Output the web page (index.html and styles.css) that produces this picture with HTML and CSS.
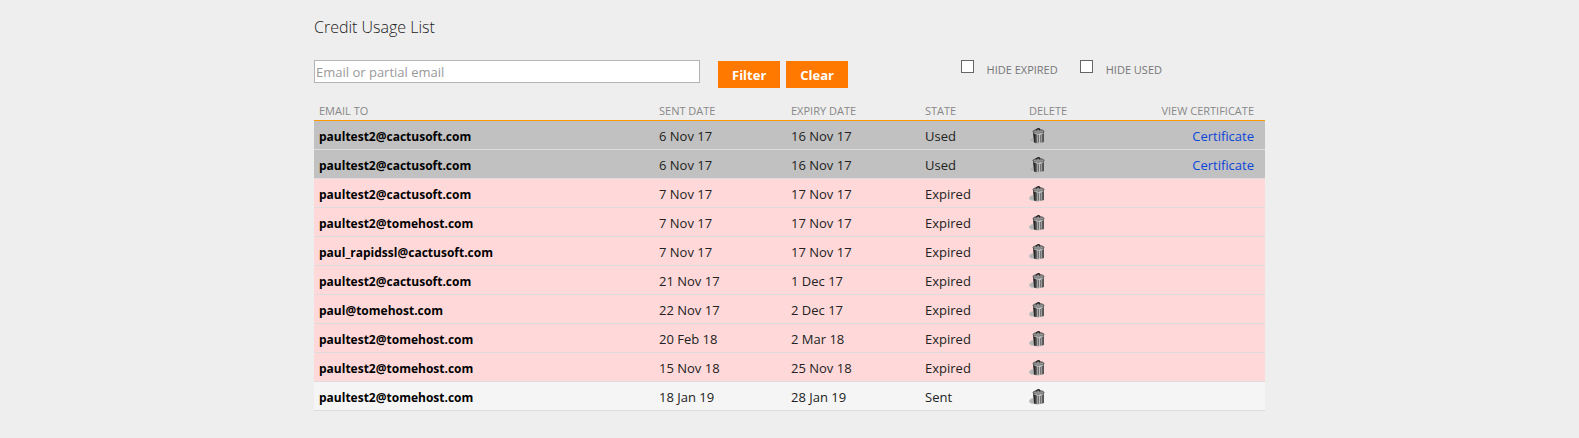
FILE: index.html
```html
<!DOCTYPE html>
<html lang="en">

<head>
    <meta charset="UTF-8">
    <meta name="viewport" content="width=device-width, initial-scale=1.0">
    <title>Credit Usage List</title>
    <link rel="stylesheet" href="styles.css">
</head>

<body>
    <svg class="sprite" aria-hidden="true">
        <defs>
            <linearGradient id="metal" x1="0" x2="1" y1="0" y2="0">
                <stop offset="0" stop-color="#111" />
                <stop offset="0.2" stop-color="#333" />
                <stop offset="0.35" stop-color="#999" />
                <stop offset="0.65" stop-color="#c8c8c8" />
                <stop offset="1" stop-color="#444" />
            </linearGradient>
        </defs>
        <symbol id="bin" viewBox="0 0 16 16">
            <path d="M4 9 Q0 10 0 12.500 Q1 15 6 15 Z" fill="#b4b4b4" stroke="#d4d4d4" stroke-width="0.500" />
            <path d="M4 4 H15 V14 Q10 16.500 5 14.500 Z" fill="url(#metal)" />
            <path d="M7.500 7 V14.500 M9.500 7 V14.500 M11.500 7 V14.500 M13.500 6 V14" stroke="#555" stroke-width="0.700" />
            <ellipse cx="9.500" cy="3.500" rx="5.500" ry="2" fill="#909090" stroke="#333" stroke-width="0.700" />
            <path d="M4.500 5 Q9.500 7 14.500 5" fill="none" stroke="#ccc" stroke-width="0.800" />
            <path d="M7 2.500 Q8 0.500 10 0.500 L11 2.500" fill="none" stroke="#222" stroke-width="1.200" />
        </symbol>
    </svg>

    <div class="container">
        <h1>Credit Usage List</h1>
        <form class="filters">
            <input type="text" class="search" placeholder="Email or partial email" aria-label="Email or partial email">
            <div class="buttons">
                <button type="button">Filter</button>
                <button type="button">Clear</button>
            </div>
            <div class="checks">
                <label><input type="checkbox"><span>HIDE EXPIRED</span></label>
                <label><input type="checkbox"><span>HIDE USED</span></label>
            </div>
        </form>

        <table>
            <thead>
                <tr>
                    <th class="col-email">EMAIL TO</th>
                    <th class="col-sent">SENT DATE</th>
                    <th class="col-expiry">EXPIRY DATE</th>
                    <th class="col-state">STATE</th>
                    <th class="col-delete">DELETE</th>
                    <th class="view">VIEW CERTIFICATE</th>
                </tr>
            </thead>
            <tbody>
                <tr class="used">
                    <td class="email">paultest2@cactusoft.com</td>
                    <td>6 Nov 17</td>
                    <td>16 Nov 17</td>
                    <td>Used</td>
                    <td><button class="bin" aria-label="Delete"><svg><use href="#bin" /></svg></button></td>
                    <td class="view"><a href="#">Certificate</a></td>
                </tr>
                <tr class="used">
                    <td class="email">paultest2@cactusoft.com</td>
                    <td>6 Nov 17</td>
                    <td>16 Nov 17</td>
                    <td>Used</td>
                    <td><button class="bin" aria-label="Delete"><svg><use href="#bin" /></svg></button></td>
                    <td class="view"><a href="#">Certificate</a></td>
                </tr>
                <tr class="expired">
                    <td class="email">paultest2@cactusoft.com</td>
                    <td>7 Nov 17</td>
                    <td>17 Nov 17</td>
                    <td>Expired</td>
                    <td><button class="bin" aria-label="Delete"><svg><use href="#bin" /></svg></button></td>
                    <td class="view"></td>
                </tr>
                <tr class="expired">
                    <td class="email">paultest2@tomehost.com</td>
                    <td>7 Nov 17</td>
                    <td>17 Nov 17</td>
                    <td>Expired</td>
                    <td><button class="bin" aria-label="Delete"><svg><use href="#bin" /></svg></button></td>
                    <td class="view"></td>
                </tr>
                <tr class="expired">
                    <td class="email">paul_rapidssl@cactusoft.com</td>
                    <td>7 Nov 17</td>
                    <td>17 Nov 17</td>
                    <td>Expired</td>
                    <td><button class="bin" aria-label="Delete"><svg><use href="#bin" /></svg></button></td>
                    <td class="view"></td>
                </tr>
                <tr class="expired">
                    <td class="email">paultest2@cactusoft.com</td>
                    <td>21 Nov 17</td>
                    <td>1 Dec 17</td>
                    <td>Expired</td>
                    <td><button class="bin" aria-label="Delete"><svg><use href="#bin" /></svg></button></td>
                    <td class="view"></td>
                </tr>
                <tr class="expired">
                    <td class="email">paul@tomehost.com</td>
                    <td>22 Nov 17</td>
                    <td>2 Dec 17</td>
                    <td>Expired</td>
                    <td><button class="bin" aria-label="Delete"><svg><use href="#bin" /></svg></button></td>
                    <td class="view"></td>
                </tr>
                <tr class="expired">
                    <td class="email">paultest2@tomehost.com</td>
                    <td>20 Feb 18</td>
                    <td>2 Mar 18</td>
                    <td>Expired</td>
                    <td><button class="bin" aria-label="Delete"><svg><use href="#bin" /></svg></button></td>
                    <td class="view"></td>
                </tr>
                <tr class="expired">
                    <td class="email">paultest2@tomehost.com</td>
                    <td>15 Nov 18</td>
                    <td>25 Nov 18</td>
                    <td>Expired</td>
                    <td><button class="bin" aria-label="Delete"><svg><use href="#bin" /></svg></button></td>
                    <td class="view"></td>
                </tr>
                <tr>
                    <td class="email">paultest2@tomehost.com</td>
                    <td>18 Jan 19</td>
                    <td>28 Jan 19</td>
                    <td>Sent</td>
                    <td><button class="bin" aria-label="Delete"><svg><use href="#bin" /></svg></button></td>
                    <td class="view"></td>
                </tr>
            </tbody>
        </table>
    </div>
</body>

</html>
```

FILE: styles.css
```css
* {
    box-sizing: border-box;
}

body {
    margin: 0;
    background: #eeeeee;
    color: #222;
    font-family: "Segoe UI", "Open Sans", "Noto Sans", sans-serif;
    font-size: 13px;
}

.sprite {
    display: block;
    width: 0;
    height: 0;
}

.container {
    max-width: 951px;
    margin: 0 auto;
    padding: 15px 0 24px;
}

h1 {
    margin: 0;
    font-size: 16px;
    font-weight: 300;
    line-height: 24px;
}

.filters {
    display: flex;
    align-items: flex-start;
    margin-top: 21px;
}

.search {
    width: 386px;
    height: 23px;
    padding: 0 1px;
    border: 1px solid #b4b4b4;
    background: #fff;
    font-family: inherit;
    font-size: 13px;
}

.search::placeholder {
    color: #999;
}

.buttons {
    display: flex;
    gap: 6px;
    margin: 1px 0 0 18px;
}

.buttons button {
    height: 27px;
    padding: 0 14px;
    border: 0;
    background: #ff7800;
    color: #fff;
    font-family: inherit;
    font-size: 13px;
    font-weight: bold;
    cursor: pointer;
}

.checks {
    display: flex;
    gap: 22px;
    margin: 0 103px 0 auto;
    color: #777;
    font-size: 11px;
}

.checks label {
    display: flex;
    gap: 13px;
}

.checks input {
    appearance: none;
    width: 13px;
    height: 13px;
    margin: 0;
    border: 1px solid #666;
    background: #fff;
}

.checks input:checked {
    background: #ff7800;
}

.checks span {
    line-height: 20px;
}

table {
    width: 100%;
    margin-top: 12px;
    border-collapse: separate;
    border-spacing: 0;
    table-layout: fixed;
}

th {
    height: 21px;
    padding: 0 5px;
    border-bottom: 1px solid #ff9900;
    color: #888;
    font-size: 11px;
    font-weight: normal;
    text-align: left;
    white-space: nowrap;
}

.col-email {
    width: 340px;
}

.col-sent {
    width: 132px;
}

.col-expiry {
    width: 134px;
}

.col-state {
    width: 104px;
}

.col-delete {
    width: 100px;
}

td {
    height: 29px;
    padding: 2px 5px 0;
    border-bottom: 1px solid #dddddd;
    background: #f5f5f5;
}

.used td {
    background: #c1c1c1;
}

.expired td {
    background: #ffd9d9;
}

.email {
    color: #000;
    font-size: 12px;
    font-weight: bold;
}

.view {
    padding-right: 11px;
    text-align: right;
}

a {
    color: #0a46d8;
    text-decoration: none;
}

.bin {
    display: block;
    padding: 0;
    border: 0;
    background: none;
    cursor: pointer;
}

.bin svg {
    display: block;
    width: 16px;
    height: 16px;
}
```
